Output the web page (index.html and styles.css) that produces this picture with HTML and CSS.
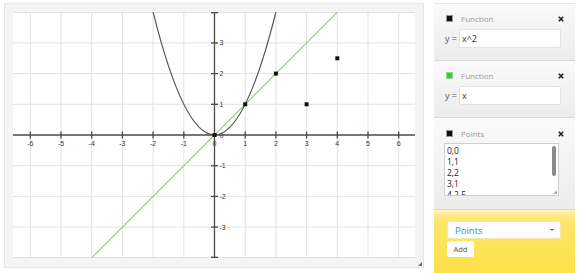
FILE: index.html
```html
<!DOCTYPE html>
<html>
<head>
<meta charset="utf-8">
<link rel="stylesheet" href="styles.css">
</head>
<body>
<div class="app">
  <div class="graph-frame">
    <svg class="plot" width="402" height="246" viewBox="0 0 402 246">
      <rect x="0" y="0" width="402" height="246" fill="#fff"/>
      <g stroke="#e2e2e2" stroke-width="1">
        <line x1="17.3" y1="0" x2="17.3" y2="246"/>
        <line x1="48.0" y1="0" x2="48.0" y2="246"/>
        <line x1="78.7" y1="0" x2="78.7" y2="246"/>
        <line x1="109.4" y1="0" x2="109.4" y2="246"/>
        <line x1="140.1" y1="0" x2="140.1" y2="246"/>
        <line x1="170.8" y1="0" x2="170.8" y2="246"/>
        <line x1="232.2" y1="0" x2="232.2" y2="246"/>
        <line x1="262.9" y1="0" x2="262.9" y2="246"/>
        <line x1="293.6" y1="0" x2="293.6" y2="246"/>
        <line x1="324.3" y1="0" x2="324.3" y2="246"/>
        <line x1="355.0" y1="0" x2="355.0" y2="246"/>
        <line x1="385.7" y1="0" x2="385.7" y2="246"/>
        <line x1="0" y1="0.5" x2="402" y2="0.5"/>
        <line x1="0" y1="30.9" x2="402" y2="30.9"/>
        <line x1="0" y1="61.6" x2="402" y2="61.6"/>
        <line x1="0" y1="92.3" x2="402" y2="92.3"/>
        <line x1="0" y1="153.7" x2="402" y2="153.7"/>
        <line x1="0" y1="184.4" x2="402" y2="184.4"/>
        <line x1="0" y1="215.1" x2="402" y2="215.1"/>
        <line x1="0" y1="245.5" x2="402" y2="245.5"/>
      </g>
      <g stroke="#4a4a4a" stroke-width="1.3">
        <line x1="0" y1="123" x2="402" y2="123"/>
        <line x1="201.5" y1="0" x2="201.5" y2="246"/>
        <line x1="17.3" y1="119.5" x2="17.3" y2="126.5"/>
        <line x1="48.0" y1="119.5" x2="48.0" y2="126.5"/>
        <line x1="78.7" y1="119.5" x2="78.7" y2="126.5"/>
        <line x1="109.4" y1="119.5" x2="109.4" y2="126.5"/>
        <line x1="140.1" y1="119.5" x2="140.1" y2="126.5"/>
        <line x1="170.8" y1="119.5" x2="170.8" y2="126.5"/>
        <line x1="232.2" y1="119.5" x2="232.2" y2="126.5"/>
        <line x1="262.9" y1="119.5" x2="262.9" y2="126.5"/>
        <line x1="293.6" y1="119.5" x2="293.6" y2="126.5"/>
        <line x1="324.3" y1="119.5" x2="324.3" y2="126.5"/>
        <line x1="355.0" y1="119.5" x2="355.0" y2="126.5"/>
        <line x1="385.7" y1="119.5" x2="385.7" y2="126.5"/>
        <line x1="198" y1="0.7" x2="205" y2="0.7"/>
        <line x1="198" y1="30.9" x2="205" y2="30.9"/>
        <line x1="198" y1="61.6" x2="205" y2="61.6"/>
        <line x1="198" y1="92.3" x2="205" y2="92.3"/>
        <line x1="198" y1="153.7" x2="205" y2="153.7"/>
        <line x1="198" y1="184.4" x2="205" y2="184.4"/>
        <line x1="198" y1="215.1" x2="205" y2="215.1"/>
        <line x1="198" y1="245.3" x2="205" y2="245.3"/>
      </g>
      <g class="lbl" text-anchor="middle">
        <text x="17.3" y="134">-6</text>
        <text x="48.0" y="134">-5</text>
        <text x="78.7" y="134">-4</text>
        <text x="109.4" y="134">-3</text>
        <text x="140.1" y="134">-2</text>
        <text x="170.8" y="134">-1</text>
        <text x="201.5" y="134">0</text>
        <text x="232.2" y="134">1</text>
        <text x="262.9" y="134">2</text>
        <text x="293.6" y="134">3</text>
        <text x="324.3" y="134">4</text>
        <text x="355.0" y="134">5</text>
        <text x="385.7" y="134">6</text>
      </g>
      <g class="lbl" text-anchor="start">
        <text x="206.5" y="33.4">3</text>
        <text x="206.5" y="64.1">2</text>
        <text x="206.5" y="94.8">1</text>
        <text x="206.5" y="125.5">0</text>
        <text x="206.5" y="156.2">-1</text>
        <text x="206.5" y="186.9">-2</text>
        <text x="206.5" y="217.6">-3</text>
      </g>
      <line x1="78.7" y1="245.8" x2="324.3" y2="0.2" stroke="#7fd657" stroke-width="1.1"/>
      <path d="M140.1 0.2 Q201.5 245.8 262.9 0.2" fill="none" stroke="#555" stroke-width="1.2"/>
      <g fill="#111">
        <rect x="199.5" y="121" width="4" height="4"/>
        <rect x="230.2" y="90.3" width="4" height="4"/>
        <rect x="260.9" y="59.6" width="4" height="4"/>
        <rect x="291.6" y="90.3" width="4" height="4"/>
        <rect x="322.3" y="44.3" width="4" height="4"/>
      </g>
    </svg>
    <span class="grip"></span>
  </div>

  <div class="side">
    <div class="panel p1">
      <div class="head">
        <span class="swatch black"></span>
        <span class="title">Function</span>
        <svg class="close" width="6" height="6" viewBox="0 0 6 6"><path d="M0.8 0.8 L5.2 5.2 M5.2 0.8 L0.8 5.2" stroke="#222" stroke-width="1.6"/></svg>
      </div>
      <div class="row">
        <span class="yeq">y =</span>
        <div class="input">x^2</div>
      </div>
    </div>
    <div class="panel p2">
      <div class="head">
        <span class="swatch green"></span>
        <span class="title">Function</span>
        <svg class="close" width="6" height="6" viewBox="0 0 6 6"><path d="M0.8 0.8 L5.2 5.2 M5.2 0.8 L0.8 5.2" stroke="#222" stroke-width="1.6"/></svg>
      </div>
      <div class="row">
        <span class="yeq">y =</span>
        <div class="input">x</div>
      </div>
    </div>
    <div class="panel p3">
      <div class="head">
        <span class="swatch black"></span>
        <span class="title">Points</span>
        <svg class="close" width="6" height="6" viewBox="0 0 6 6"><path d="M0.8 0.8 L5.2 5.2 M5.2 0.8 L0.8 5.2" stroke="#222" stroke-width="1.6"/></svg>
      </div>
      <div class="textarea">
        <div class="line">0,0</div>
        <div class="line">1,1</div>
        <div class="line">2,2</div>
        <div class="line">3,1</div>
        <div class="line">4,2.5</div>
        <span class="thumb"></span>
        <span class="tgrip"></span>
      </div>
    </div>
    <div class="adder">
      <div class="select"><span>Points</span><span class="caret"></span></div>
      <div class="add">Add</div>
    </div>
  </div>
</div>
</body>
</html>
```

FILE: styles.css
```css
* { box-sizing: border-box; }
html, body {
  margin: 0;
  padding: 0;
  background: #fff;
  width: 580px;
  height: 273px;
  overflow: hidden;
  font-family: "Open Sans", "DejaVu Sans", sans-serif;
}
.app {
  display: flex;
  align-items: flex-start;
  padding: 3px 0 0 4px;
}
.graph-frame {
  position: relative;
  width: 420px;
  height: 265px;
  padding: 8px;
  background: #f4f4f4;
  border: 1px solid #e6e6e6;
}
.plot { display: block; }
.lbl text {
  font-family: "Liberation Sans", Arial, sans-serif;
  font-size: 7px;
  fill: #333;
}
.grip {
  position: absolute;
  right: 1px;
  bottom: 1px;
  width: 0;
  height: 0;
  border-left: 4px solid transparent;
  border-bottom: 4px solid #666;
}
.side {
  margin-left: 10px;
  width: 141px;
  height: 270px;
  display: flex;
  flex-direction: column;
  border-top: 1px solid #e4e4e4;
}
.panel {
  background: linear-gradient(#fafafa, #ececec);
  border-bottom: 1px solid #d8d8d8;
  padding: 10px 10px 0 11px;
}
.p1 { height: 57px; }
.p2 { height: 57px; }
.p3 { height: 92px; padding-top: 11px; }
.head {
  display: flex;
  align-items: center;
  height: 9px;
}
.swatch {
  width: 7px;
  height: 7px;
  margin-left: 1px;
  border: 1px solid #999;
}
.swatch.black { background: #111; }
.swatch.green { background: #33cc33; border-color: #9ad29a; }
.title {
  margin-left: 8px;
  font-size: 8px;
  color: #9a9a9a;
  line-height: 9px;
}
.close { margin-left: auto; margin-right: 1px; }
.row {
  display: flex;
  align-items: center;
  margin-top: 6px;
}
.yeq {
  font-size: 9px;
  color: #555;
  width: 14px;
}
.input {
  width: 102px;
  height: 19px;
  background: #fff;
  border: 1px solid #e2e2e2;
  border-radius: 2px;
  font-size: 9px;
  color: #333;
  line-height: 17px;
  padding-left: 2px;
}
.textarea {
  position: relative;
  margin-top: 5px;
  margin-left: -1px;
  width: 115px;
  height: 53px;
  background: #fff;
  border: 1px solid #cfcfcf;
  overflow: hidden;
  padding: 1px 0 0 2px;
}
.line {
  font-size: 8.5px;
  line-height: 11px;
  color: #222;
}
.thumb {
  position: absolute;
  right: 2px;
  top: 2px;
  width: 4px;
  height: 30px;
  background: #8a8a8a;
  border-radius: 2px;
}
.tgrip {
  position: absolute;
  right: 1px;
  bottom: 1px;
  width: 0;
  height: 0;
  border-left: 4px solid transparent;
  border-bottom: 4px solid #aaa;
}
.adder {
  flex: 1;
  background: linear-gradient(#fdf4c0 0px, #fde675 8px, #fde45c 40%, #fde048 100%);
  padding: 11px 0 0 13px;
}
.select {
  display: flex;
  align-items: center;
  justify-content: space-between;
  width: 114px;
  height: 18px;
  background: #fff;
  border: 1px solid #f0e6b0;
  border-radius: 2px;
  padding: 0 6px 0 7px;
  font-size: 9.5px;
  color: #2e8fc4;
}
.caret {
  width: 0;
  height: 0;
  border-left: 2px solid transparent;
  border-right: 2px solid transparent;
  border-top: 2px solid #555;
}
.add {
  margin-top: 2px;
  width: 27px;
  height: 16px;
  background: #fff;
  border-radius: 2px;
  font-size: 7.5px;
  color: #555;
  text-align: center;
  line-height: 16px;
}
```
